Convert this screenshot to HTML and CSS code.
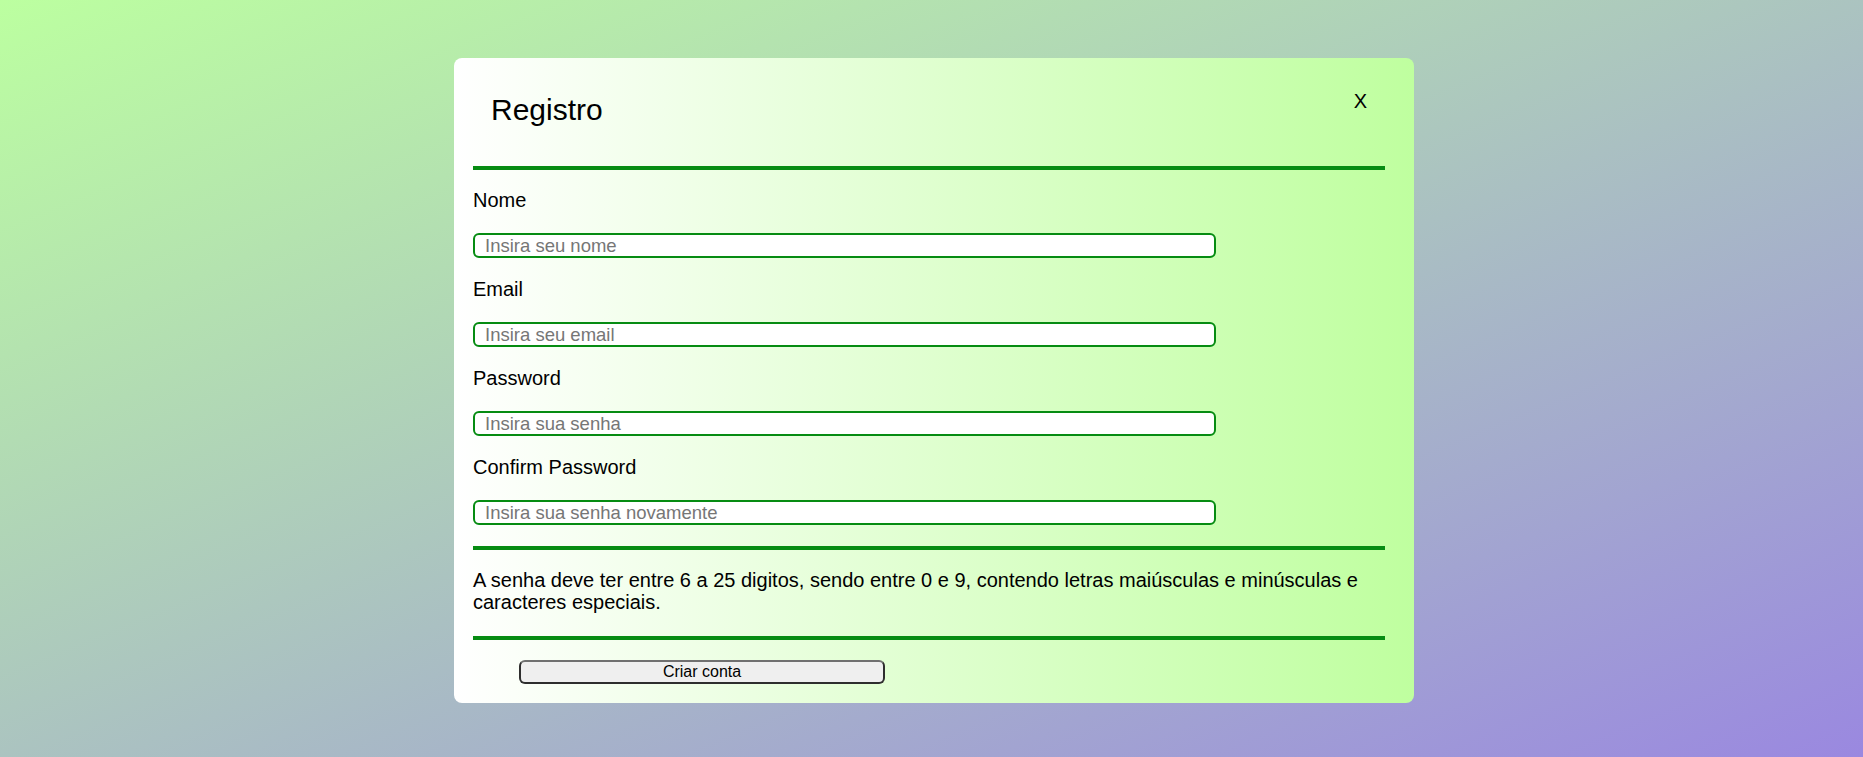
FILE: index.html
```html
<!DOCTYPE html>
<html lang="pt">
<head>
<meta charset="utf-8">
<title>Registro</title>
<link rel="stylesheet" href="styles.css">
</head>
<body>
<div class="page">
  <div class="modal">
    <div class="modal-header">
      <h1 class="title">Registro</h1>
      <span class="close">X</span>
    </div>
    <div class="divider"></div>
    <form class="form">
      <div class="field">
        <label class="label" for="nome">Nome</label>
        <input class="input" id="nome" type="text" placeholder="Insira seu nome">
      </div>
      <div class="field">
        <label class="label" for="email">Email</label>
        <input class="input" id="email" type="text" placeholder="Insira seu email">
      </div>
      <div class="field">
        <label class="label" for="senha">Password</label>
        <input class="input" id="senha" type="password" placeholder="Insira sua senha">
      </div>
      <div class="field last">
        <label class="label" for="senha2">Confirm Password</label>
        <input class="input" id="senha2" type="password" placeholder="Insira sua senha novamente">
      </div>
    </form>
    <div class="divider"></div>
    <p class="hint">A senha deve ter entre 6 a 25 digitos, sendo entre 0 e 9, contendo letras maiúsculas e minúsculas e caracteres especiais.</p>
    <div class="divider"></div>
    <div class="footer">
      <button class="btn" type="button">Criar conta</button>
    </div>
  </div>
</div>
</body>
</html>
```

FILE: styles.css
```css
html, body {
  margin: 0;
  padding: 0;
  height: 100%;
}
body {
  font-family: "Liberation Sans", Arial, sans-serif;
  color: #000;
  background: linear-gradient(to bottom right, #bcffa0, #9a88e0);
  overflow: hidden;
}
.page {
  display: flex;
  justify-content: center;
  padding: 58px 0 0 5px;
}
.modal {
  width: 960px;
  box-sizing: border-box;
  padding: 0 29px 0 19px;
  border-radius: 8px;
  background: linear-gradient(to right, #ffffff, #bfff9f);
}
.modal-header {
  height: 108px;
  box-sizing: border-box;
  display: flex;
  justify-content: space-between;
  align-items: flex-start;
  padding: 32px 18px 0 18px;
}
.title {
  margin: 3px 0 0 0;
  font-size: 30px;
  font-weight: normal;
  line-height: normal;
}
.close {
  font-size: 20px;
  line-height: 23px;
}
.divider {
  height: 4px;
  background: #068c12;
}
.form {
  padding: 19px 0 21px 0;
  margin: 0;
}
.field {
  margin-bottom: 20px;
}
.field.last {
  margin-bottom: 0;
}
.label {
  display: block;
  font-size: 20px;
  line-height: 23px;
  margin-bottom: 21px;
}
.input {
  display: block;
  width: 743px;
  height: 25px;
  box-sizing: border-box;
  margin: 0;
  padding: 0 10px;
  border: 2px solid #068c12;
  border-radius: 6px;
  background: #fff;
  font-family: "Liberation Sans", Arial, sans-serif;
  font-size: 18.5px;
  outline: none;
}
.input::placeholder {
  color: #767676;
}
.hint {
  margin: 19px 0 23px 0;
  font-size: 20px;
  line-height: 22px;
}
.footer {
  padding: 20px 0 19px 46px;
}
.btn {
  display: block;
  width: 366px;
  height: 24px;
  box-sizing: border-box;
  margin: 0;
  padding: 0;
  border: 2px solid #2e2e2e;
  border-top-color: #707070;
  border-radius: 6px;
  background: #efefef;
  font-family: "Liberation Sans", Arial, sans-serif;
  font-size: 16px;
  color: #000;
}
```
